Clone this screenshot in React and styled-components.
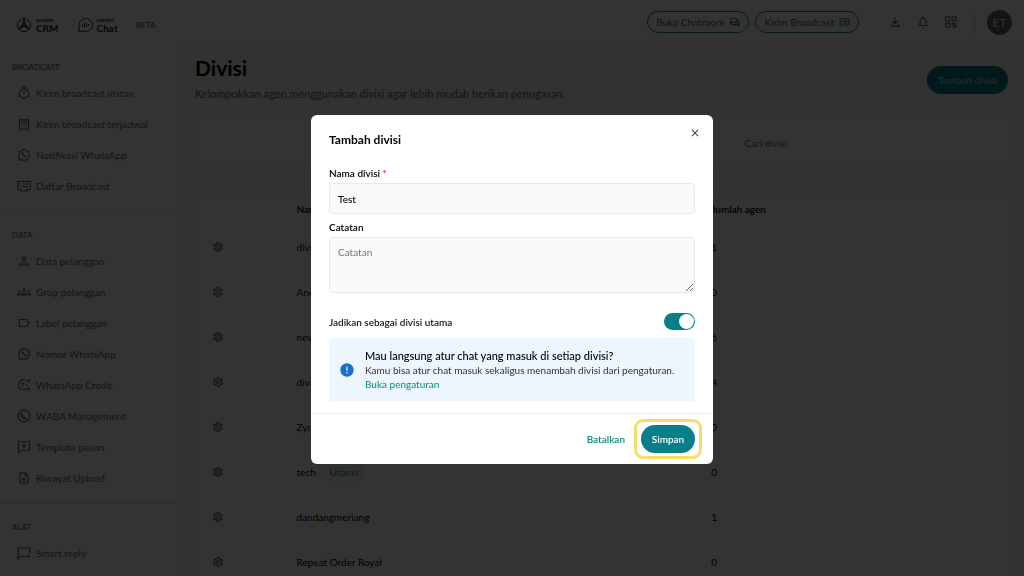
import React, { useState } from "react";
import styled, { createGlobalStyle } from "styled-components";
import {
  MdOutlineTimer,
  MdOutlineCalendarMonth,
  MdOutlinePerson,
  MdOutlineGroups,
  MdLabelOutline,
  MdOutlineUploadFile,
  MdOutlineFileDownload,
  MdOutlineNotifications,
  MdOutlineSettings,
  MdOutlineForum,
  MdClose,
  MdError,
} from "react-icons/md";

const WhatsAppIcon = () => (
  <svg viewBox="0 0 24 24" fill="none" stroke="currentColor" strokeWidth="2" strokeLinejoin="round">
    <path d="M3 21l1.400-4.600A9 9 0 1 1 7.600 19.700Z" />
    <path d="M8.500 7.500c-.8 4.500 3.500 8.800 8 8l.3-2-2.300-1-1.200 1c-1.200-.6-2-1.400-2.600-2.600l1-1.200-1-2.300Z" fill="currentColor" stroke="none" />
  </svg>
);

const WabaIcon = () => (
  <svg viewBox="0 0 24 24" fill="none" stroke="currentColor" strokeWidth="2">
    <circle cx="12" cy="12" r="10" />
    <path d="M7 7c.5 5.500 4.500 9.500 10 10" strokeWidth="3" />
  </svg>
);

const MessageListIcon = () => (
  <svg viewBox="0 0 24 24" fill="none" stroke="currentColor" strokeWidth="2">
    <path d="M1.500 4h21v14h-5v2.500h-11V18h-5Z" />
    <path d="M5 8.500h2M9 8.500h10M5 13h2M9 13h10" />
  </svg>
);

const CreditIcon = () => (
  <svg viewBox="0 0 24 24" fill="none" stroke="currentColor" strokeWidth="2">
    <path d="M15.500 4.500a8.500 8.500 0 1 0 1 13.500" />
    <path d="M7 9h6M10 9v6M20 2v6M17 5h6M20 16v6M17 19h6M15 12h4" />
  </svg>
);

const TemplateIcon = () => (
  <svg viewBox="0 0 24 24" fill="none" stroke="currentColor" strokeWidth="2">
    <path d="M2.500 3h19v14.500h-15l-4 4Z" />
    <path d="M12 6.500v7.500M8.500 10.200h7" />
  </svg>
);

const ReplyIcon = () => (
  <svg viewBox="0 0 24 24" fill="none" stroke="currentColor" strokeWidth="2">
    <path d="M14 18H6l-4 4V3h20v10" />
    <path d="M19 14l1.200 2.800L23 18l-2.800 1.200L19 22l-1.200-2.800L15 18l2.800-1.200Z" fill="currentColor" stroke="none" />
  </svg>
);

const BroadcastIcon = () => (
  <svg viewBox="0 0 24 24" fill="none" stroke="currentColor" strokeWidth="2">
    <path d="M2.500 3.500h19v14h-15l-4 4Z" />
    <path d="M6 7.500h2M10 7.500h8M6 10.500h2M10 10.500h8M6 13.500h2M10 13.500h8" />
  </svg>
);

const AppsIcon = () => (
  <svg viewBox="0 0 24 24" fill="none" stroke="currentColor" strokeWidth="2">
    <path d="M3 3h7v7H3ZM14 3h7v7h-7ZM3 14h7v7H3ZM14 14h4v4h-4ZM18 18h3v3h-3ZM21 14v2M14 21h2" />
  </svg>
);

const CrmLogo = () => (
  <svg viewBox="0 0 32 32" fill="none" stroke="currentColor" strokeWidth="2">
    <path d="M12 4A13 13 0 1 0 20 4" />
    <path d="M16 0v8M16 8l-6 14M16 8l6 14M5 24l5-3 6-4 6 4 5 3" strokeWidth="3" />
  </svg>
);

const ChatLogo = () => (
  <svg viewBox="0 0 32 32" fill="none" stroke="currentColor" strokeWidth="2">
    <path d="M5 22A14 13 0 1 1 12 28L3 29l2-7Z" />
    <path d="M11 15v5M15 11v10M19 12v8M23 14v4" />
  </svg>
);

const menus = [
  {
    title: "BROADCAST",
    items: [
      { label: "Kirim broadcast instan", icon: <MdOutlineTimer /> },
      { label: "Kirim broadcast terjadwal", icon: <MdOutlineCalendarMonth /> },
      { label: "Notifikasi WhatsApp", icon: <WhatsAppIcon /> },
      { label: "Daftar Broadcast", icon: <MessageListIcon /> },
    ],
  },
  {
    title: "DATA",
    items: [
      { label: "Data pelanggan", icon: <MdOutlinePerson /> },
      { label: "Grup pelanggan", icon: <MdOutlineGroups /> },
      { label: "Label pelanggan", icon: <MdLabelOutline /> },
      { label: "Nomor WhatsApp", icon: <WhatsAppIcon /> },
      { label: "WhatsApp Credit", icon: <CreditIcon /> },
      { label: "WABA Management", icon: <WabaIcon /> },
      { label: "Template pesan", icon: <TemplateIcon /> },
      { label: "Riwayat Upload", icon: <MdOutlineUploadFile /> },
    ],
  },
  {
    title: "ALAT",
    items: [{ label: "Smart reply", icon: <ReplyIcon /> }],
  },
];

const divisions = [
  { name: "divisi", agents: 1 },
  { name: "Aneka", agents: 0 },
  { name: "new", agents: 6 },
  { name: "divisi", agents: 4 },
  { name: "Zymuno", agents: 0 },
  { name: "tech", agents: 0, main: true },
  { name: "dandangmeriang", agents: 1 },
  { name: "Repeat Order Royal", agents: 0 },
];

const App = () => {
  const [name, setName] = useState("Test");
  const [note, setNote] = useState("");
  const [isMain, setIsMain] = useState(true);

  return (
    <>
      <GlobalStyle />
      <Page>
        <Header>
          <Brand>
            <CrmLogo />
            <BrandText>
              <small>everpro</small>
              CRM
            </BrandText>
          </Brand>
          <Brand>
            <ChatLogo />
            <BrandText>
              <small>everpro</small>
              Chat
            </BrandText>
          </Brand>
          <Beta>BETA</Beta>
          <HeaderActions>
            <OutlineButton type="button">
              Buka Chatroom <MdOutlineForum />
            </OutlineButton>
            <OutlineButton type="button">
              Kirim Broadcast <BroadcastIcon />
            </OutlineButton>
            <IconGroup>
              <IconButton type="button" aria-label="Unduhan">
                <MdOutlineFileDownload />
              </IconButton>
              <IconButton type="button" aria-label="Notifikasi">
                <MdOutlineNotifications />
              </IconButton>
              <IconButton type="button" aria-label="Aplikasi">
                <AppsIcon />
              </IconButton>
            </IconGroup>
            <Avatar>ET</Avatar>
          </HeaderActions>
        </Header>

        <Body>
          <Sidebar>
            {menus.map((menu) => (
              <MenuSection key={menu.title}>
                <MenuTitle>{menu.title}</MenuTitle>
                {menu.items.map((item) => (
                  <MenuItem key={item.label} href="#">
                    {item.icon}
                    {item.label}
                  </MenuItem>
                ))}
              </MenuSection>
            ))}
          </Sidebar>

          <Main>
            <TitleRow>
              <div>
                <H1>Divisi</H1>
                <Desc>
                  Kelompokkan agen menggunakan divisi agar lebih mudah berikan penugasan.
                </Desc>
              </div>
              <AddButton type="button">Tambah divisi</AddButton>
            </TitleRow>
            <SearchCard>
              <SearchInput type="text" aria-label="Cari divisi" placeholder="Cari divisi" />
            </SearchCard>
            <Table>
              <thead>
                <tr>
                  <Th $width="12%" aria-label="Aksi" />
                  <Th $width="51%">Nama divisi</Th>
                  <Th>Jumlah agen</Th>
                </tr>
              </thead>
              <tbody>
                {divisions.map((division, idx) => (
                  <tr key={idx}>
                    <Td>
                      <GearButton type="button" aria-label="Atur divisi">
                        <MdOutlineSettings />
                      </GearButton>
                    </Td>
                    <Td>
                      {division.name}
                      {division.main && <Tag>Utama</Tag>}
                    </Td>
                    <Td>{division.agents}</Td>
                  </tr>
                ))}
              </tbody>
            </Table>
          </Main>
        </Body>
      </Page>

      <Overlay>
        <Modal role="dialog" aria-modal="true" aria-labelledby="modal-title">
          <ModalBody>
            <ModalTop>
              <ModalTitle id="modal-title">Tambah divisi</ModalTitle>
              <CloseButton type="button" aria-label="Tutup">
                <MdClose />
              </CloseButton>
            </ModalTop>
            <Label htmlFor="name">
              Nama divisi <Required>*</Required>
            </Label>
            <Input id="name" value={name} onChange={(e) => setName(e.target.value)} />
            <Label htmlFor="note">Catatan</Label>
            <Textarea
              id="note"
              placeholder="Catatan"
              value={note}
              onChange={(e) => setNote(e.target.value)}
            />
            <SwitchRow>
              <label htmlFor="main">Jadikan sebagai divisi utama</label>
              <Switch
                id="main"
                type="checkbox"
                role="switch"
                checked={isMain}
                onChange={(e) => setIsMain(e.target.checked)}
              />
            </SwitchRow>
            <Info>
              <MdError />
              <div>
                <InfoTitle>Mau langsung atur chat yang masuk di setiap divisi?</InfoTitle>
                <InfoText>
                  Kamu bisa atur chat masuk sekaligus menambah divisi dari pengaturan.
                </InfoText>
                <InfoLink href="#">Buka pengaturan</InfoLink>
              </div>
            </Info>
          </ModalBody>
          <ModalFooter>
            <CancelButton type="button">Batalkan</CancelButton>
            <Highlight>
              <SaveButton type="button">Simpan</SaveButton>
            </Highlight>
          </ModalFooter>
        </Modal>
      </Overlay>
    </>
  );
};

export default App;

const GlobalStyle = createGlobalStyle`
  * {
    box-sizing: border-box;
  }

  body {
    margin: 0;
    overflow: hidden;
    background-color: #fff;
    color: #000;
    font-family: Lato, "Open Sans", sans-serif;
    font-size: 10px;
    line-height: 14px;
  }

  button, input, textarea {
    font: inherit;
    color: inherit;
  }

  button {
    padding: 0;
    border: 0;
    background: none;
    cursor: pointer;
  }

  a {
    text-decoration: none;
  }
`;

const Page = styled.div`
  height: 100vh;
  overflow: hidden;
  display: flex;
  flex-direction: column;
`;

const Header = styled.header`
  height: 44px;
  flex: none;
  display: flex;
  align-items: center;
  padding: 0 12px 0 16px;
`;

const Brand = styled.div`
  display: flex;
  align-items: center;
  gap: 4px;
  margin-right: 18px;
  padding-top: 6px;
  color: #333;

  svg {
    width: 16px;
    height: 16px;
  }
`;

const BrandText = styled.div`
  font-size: 10px;
  line-height: 10px;
  font-weight: 900;

  small {
    display: block;
    font-size: 5px;
    line-height: 5px;
  }
`;

const Beta = styled.span`
  padding-top: 6px;
  font-size: 8px;
  font-weight: 700;
  color: #777;
`;

const HeaderActions = styled.div`
  margin-left: auto;
  display: flex;
  align-items: center;
  gap: 6px;
`;

const OutlineButton = styled.button`
  height: 22px;
  display: flex;
  align-items: center;
  gap: 5px;
  padding: 0 8px;
  border: 1px solid #2f7a7e;
  border-radius: 11px;
  color: #2f6d72;

  svg {
    width: 11px;
    height: 11px;
  }
`;

const IconGroup = styled.div`
  display: flex;
  gap: 14px;
  padding: 5px 16px 5px 23px;
  border-right: 1px solid #d5dada;
  margin-right: 6px;
`;

const IconButton = styled.button`
  display: flex;
  color: #666;

  svg {
    width: 14px;
    height: 14px;
  }
`;

const Avatar = styled.div`
  width: 25px;
  height: 25px;
  border-radius: 50%;
  background-color: #59646e;
  color: #e5e8ea;
  font-size: 12px;
  line-height: 25px;
  text-align: center;
`;

const Body = styled.div`
  flex: 1;
  min-height: 0;
  display: flex;
`;

const Sidebar = styled.nav`
  width: 179px;
  flex: none;
  border-right: 1px solid #f0f2f2;
`;

const MenuSection = styled.section`
  padding: 16px 12px 10px;
  border-bottom: 1px solid #dcdfdf;
`;

const MenuTitle = styled.h2`
  margin: 0 0 3px;
  font-size: 8px;
  line-height: 14px;
  font-weight: 500;
  color: #666;
`;

const MenuItem = styled.a`
  height: 31px;
  display: flex;
  align-items: center;
  gap: 5px;
  padding-left: 5px;
  color: #666;

  svg {
    width: 14px;
    height: 14px;
  }
`;

const Main = styled.main`
  flex: 1;
  padding: 10px 16px 0;
  background-color: #f2f7f6;
`;

const TitleRow = styled.div`
  display: flex;
  justify-content: space-between;
  align-items: flex-start;
  margin-bottom: 16px;
`;

const H1 = styled.h1`
  margin: 0;
  font-size: 21px;
  line-height: 28px;
`;

const Desc = styled.p`
  margin: 4px 0 0;
  font-size: 11px;
  line-height: 16px;
  color: #666;
`;

const AddButton = styled.button`
  height: 28px;
  margin-top: 12px;
  padding: 0 11px;
  border-radius: 14px;
  background-color: #077f88;
  color: #c0dadb;
`;

const SearchCard = styled.div`
  display: flex;
  justify-content: flex-end;
  padding: 12px 9px;
  border-radius: 4px;
  background-color: #fff;
`;

const SearchInput = styled.input`
  width: 32%;
  height: 25px;
  padding: 0;
  border: 0;
  background: none;

  &::placeholder {
    color: #666;
    opacity: 1;
  }
`;

const Table = styled.table`
  width: 100%;
  margin-top: 26px;
  border-collapse: collapse;
  table-layout: fixed;
  background-color: #fff;
`;

const Th = styled.th`
  width: ${(props) => props.$width || "auto"};
  height: 31px;
  padding: 0 4px;
  text-align: left;
  font-weight: 600;
`;

const Td = styled.td`
  height: 45px;
  padding: 0 4px;
`;

const GearButton = styled.button`
  display: flex;
  margin-left: 13px;
  color: #2f6f76;

  svg {
    width: 12px;
    height: 12px;
  }
`;

const Tag = styled.span`
  margin-left: 10px;
  padding: 3px 4px;
  border-radius: 4px;
  background-color: #eaf8f1;
  color: #3d8a63;
`;

const Overlay = styled.div`
  position: fixed;
  inset: 0;
  display: flex;
  align-items: center;
  justify-content: center;
  padding-top: 3px;
  background-color: rgba(0, 0, 0, 0.8);
`;

const Modal = styled.section`
  width: 402px;
  max-width: 100%;
  border-radius: 6px;
  background-color: #fff;
`;

const ModalBody = styled.div`
  padding: 12px 18px;
`;

const ModalTop = styled.div`
  display: flex;
  justify-content: space-between;
  align-items: flex-start;
  margin: 0 -6px 18px 0;
`;

const ModalTitle = styled.h2`
  margin: 5px 0 0;
  font-size: 12px;
  line-height: 16px;
  font-weight: 700;
`;

const CloseButton = styled.button`
  display: flex;
  color: #444;

  svg {
    width: 12px;
    height: 12px;
  }
`;

const Label = styled.label`
  display: block;
  margin-bottom: 3px;
  font-weight: 600;
`;

const Required = styled.span`
  color: #e03131;
`;

const Input = styled.input`
  display: block;
  width: 100%;
  height: 31px;
  margin-bottom: 6px;
  padding: 0 8px;
  border: 1px solid #e7eaec;
  border-radius: 4px;
  background-color: #f8fafb;
  font-weight: 500;
`;

const Textarea = styled.textarea`
  display: block;
  width: 100%;
  height: 56px;
  padding: 7px 8px;
  border: 1px solid #e7eaec;
  border-radius: 4px;
  background-color: #f8fafb;

  &::placeholder {
    color: #757575;
  }
`;

const SwitchRow = styled.div`
  display: flex;
  justify-content: space-between;
  align-items: center;
  margin: 20px 0 8px;
  font-weight: 500;
`;

const Switch = styled.input`
  appearance: none;
  width: 31px;
  height: 17px;
  margin: 0;
  padding: 1px;
  display: flex;
  justify-content: ${(props) => (props.checked ? "flex-end" : "flex-start")};
  border-radius: 9px;
  background-color: ${(props) => (props.checked ? "#077f88" : "#c4cacc")};
  cursor: pointer;

  &::before {
    content: "";
    width: 15px;
    height: 15px;
    border-radius: 50%;
    background-color: #fff;
  }
`;

const Info = styled.div`
  display: flex;
  align-items: center;
  gap: 10px;
  padding: 10px;
  border-radius: 4px;
  background-color: #edf5ff;

  svg {
    width: 16px;
    height: 16px;
    flex: none;
    color: #1a6fcb;
  }
`;

const InfoTitle = styled.p`
  margin: 0;
  font-size: 11px;
  line-height: 15px;
  font-weight: 500;
`;

const InfoText = styled.p`
  margin: 0;
  color: #333;
`;

const InfoLink = styled.a`
  color: #0a8a7c;
`;

const ModalFooter = styled.footer`
  display: flex;
  justify-content: flex-end;
  align-items: center;
  gap: 9px;
  padding: 5px 11px;
  border-top: 1px solid #ebedef;
`;

const CancelButton = styled.button`
  color: #0a8a7c;
  font-weight: 600;
`;

const Highlight = styled.div`
  padding: 3px 4px;
  border: 3px solid #f7dd68;
  border-radius: 9px;
`;

const SaveButton = styled.button`
  display: block;
  width: 54px;
  height: 28px;
  border-radius: 14px;
  background-color: #077f88;
  color: #fff;
  font-weight: 600;
`;
